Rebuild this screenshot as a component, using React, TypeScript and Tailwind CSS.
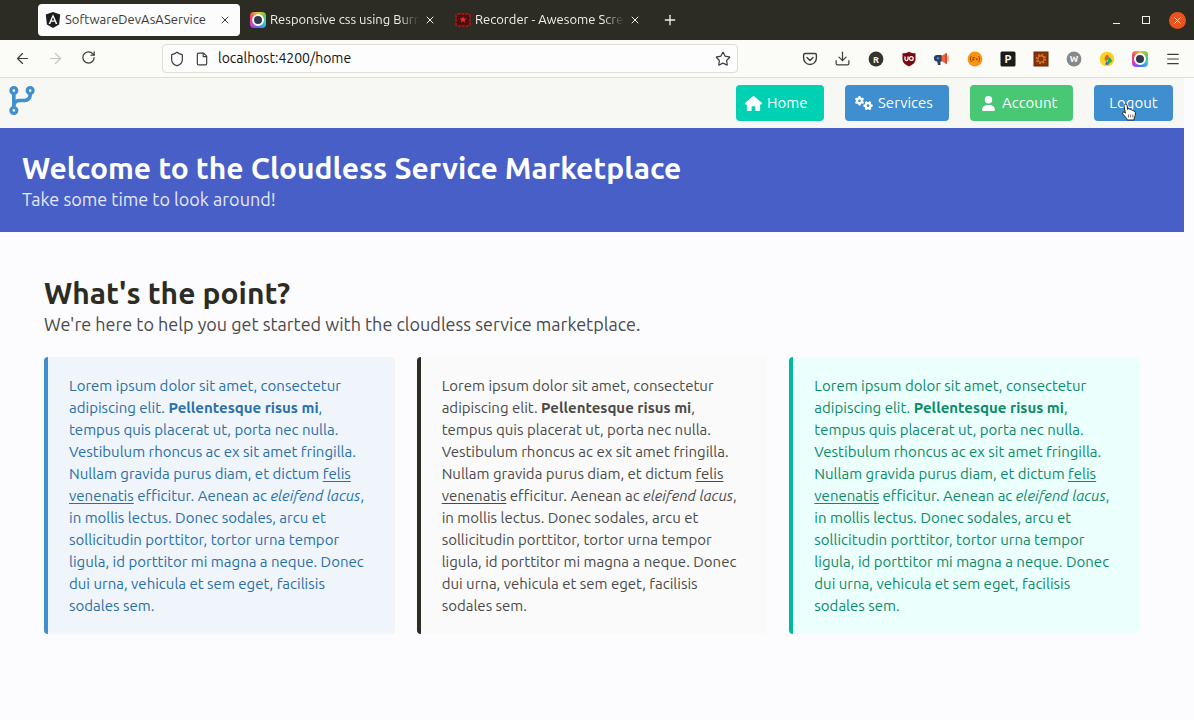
import type { ReactNode } from "react";
import { FaCodeBranch, FaGears, FaHouse, FaUser } from "react-icons/fa6";
import { ArrowLeft, ArrowRight, Download, File, Menu, Plus, RotateCw, Shield, Star, X } from "lucide-react";

function AngularIcon() {
  return (
    <svg viewBox="0 0 16 16" className="size-4 shrink-0" aria-hidden="true">
      <path d="M8 0 15.2 2.5 14.1 12.4 8 16 1.9 12.4 .8 2.5Z" fill="#1c1c1c" />
      <path d="M8 2.2 3.6 12h1.7l.9-2.2h3.6l.9 2.2h1.7ZM8 5.3l1.3 3.1H6.7Z" fill="#fff" />
    </svg>
  );
}

function CameraRingIcon() {
  return (
    <span className="flex size-4 shrink-0 items-center justify-center rounded bg-[conic-gradient(#f4c430,#5ecb5e,#36c3e0,#4a6cf0,#d33bd0,#f04a5a,#f4c430)]">
      <span className="size-3 rounded-full border-2 border-white bg-[#34364a]" />
    </span>
  );
}

function RecorderIcon() {
  return (
    <svg viewBox="0 0 16 14" className="h-3.5 w-4 shrink-0" aria-hidden="true">
      <rect x="1" y="1" width="14" height="12" rx="1.5" fill="#4a1010" stroke="#b01818" strokeWidth="1.6" strokeDasharray="3 1" />
      <path d="M8 3.2 9 5.4 11.5 5.6 9.6 7.2 10.2 9.6 8 8.3 5.8 9.6 6.4 7.2 4.5 5.6 7 5.4Z" fill="#ee2b2b" />
    </svg>
  );
}

function Tab({ icon, title, active = false }: { icon: ReactNode; title: string; active?: boolean }) {
  return (
    <div
      className={
        active
          ? "flex h-8 w-[202px] items-center gap-1 rounded bg-[#fcfcfc] pl-[7px] pr-2 text-[#3a3a3a]"
          : "flex h-8 w-[202px] items-center gap-1 rounded pl-[7px] pr-2 text-[#f0f0ea]"
      }
    >
      {icon}
      <button
        type="button"
        className={
          active
            ? "min-w-0 flex-1 overflow-hidden whitespace-nowrap text-left text-[13px]"
            : "min-w-0 flex-1 overflow-hidden whitespace-nowrap text-left text-[13px] [mask-image:linear-gradient(to_right,#000_86%,transparent_100%)]"
        }
      >
        {title}
      </button>
      <button type="button" aria-label={`Close ${title}`} className="flex w-3.5 justify-center">
        <X size={12} strokeWidth={2} />
      </button>
    </div>
  );
}

function PocketIcon() {
  return (
    <svg viewBox="0 0 16 16" className="size-4" fill="none" stroke="#3c3c38" strokeWidth="1.4" strokeLinecap="round" strokeLinejoin="round" aria-hidden="true">
      <path d="M3 2.5h10a1.4 1.4 0 0 1 1.4 1.4v3.2a6.4 6.4 0 0 1-12.8 0V3.9A1.4 1.4 0 0 1 3 2.5Z" />
      <path d="m5 6.6 3 2.8 3-2.8" />
    </svg>
  );
}

function DownloadIcon() {
  return <Download size={17} strokeWidth={1.7} />;
}

function RoundR() {
  return (
    <svg viewBox="0 0 16 16" className="size-4" aria-hidden="true">
      <circle cx="8" cy="8" r="7.4" fill="#33332f" />
      <text x="8" y="11.5" textAnchor="middle" fontSize="9" fontWeight="700" fill="#fff">R</text>
    </svg>
  );
}

function BlockerIcon() {
  return (
    <svg viewBox="0 0 16 16" className="size-4" aria-hidden="true">
      <path d="M8 .8c2 1 4 1.500 6.500 1.500V8c0 3.600-2.600 5.600-6.500 7.500C4.100 13.600 1.500 11.600 1.500 8V2.300C4 2.300 6 1.800 8 .8Z" fill="#800610" />
      <path d="M4 5.500v2.600a1.500 1.500 0 0 0 3 0V5.500" fill="none" stroke="#fff" strokeWidth="1.3" />
      <circle cx="10.3" cy="7.5" r="1.9" fill="none" stroke="#fff" strokeWidth="1.3" />
    </svg>
  );
}

function MegaphoneIcon() {
  return (
    <svg viewBox="0 0 16 16" className="size-4" aria-hidden="true">
      <path d="M7 5 13 2v11L7 10Z" fill="#f0643c" />
      <path d="M12 2.5v10" stroke="#c8452a" strokeWidth="1.6" />
      <path d="M14 4.5v6" stroke="#f3a08a" strokeWidth="1.5" />
      <path d="M3 4h4.500v6.500H6.500V14H4l-.8-3.500A3.200 3.200 0 0 1 3 4Z" fill="#283f5e" />
      <circle cx="4" cy="7.2" r="1.3" fill="#4d86c6" />
    </svg>
  );
}

function BracesIcon() {
  return (
    <svg viewBox="0 0 16 16" className="size-4" aria-hidden="true">
      <circle cx="8" cy="8" r="7.4" fill="#fb9510" />
      <path d="M4.500 5C3 6.500 3 9.500 4.500 11M11.500 5c1.500 1.500 1.500 4.500 0 6M6 6.500h2M6 6.500v3.500M6 8.200h1.500M8.700 8.200h2M9.700 7.200v2" stroke="#9b4d08" fill="none" />
    </svg>
  );
}

function SquareP() {
  return (
    <svg viewBox="0 0 16 16" className="size-4" aria-hidden="true">
      <rect x=".5" y=".5" width="15" height="15" rx="1.5" fill="#1b1b1b" />
      <text x="8" y="12" textAnchor="middle" fontSize="11" fontWeight="700" fill="#fff">P</text>
    </svg>
  );
}

function GearTile() {
  return (
    <svg viewBox="0 0 16 16" className="size-4" aria-hidden="true">
      <rect x="1" y="1" width="14" height="14" fill="#8a3208" stroke="#682406" />
      <circle cx="8" cy="8" r="4.4" fill="none" stroke="#d9822b" strokeWidth="1.6" strokeDasharray="1.6 1.85" />
      <circle cx="8" cy="8" r="3.1" fill="none" stroke="#d9822b" strokeWidth="1.1" />
    </svg>
  );
}

function RoundW() {
  return (
    <svg viewBox="0 0 16 16" className="size-4" aria-hidden="true">
      <circle cx="8" cy="8" r="7.4" fill="#888884" />
      <text x="8" y="11.3" textAnchor="middle" fontSize="9" fontWeight="700" fill="#fff">W</text>
    </svg>
  );
}

function PinwheelIcon() {
  return (
    <svg viewBox="0 0 16 16" className="size-4" aria-hidden="true">
      <circle cx="8" cy="8" r="7.3" fill="#fbd21e" />
      <path d="M8 3.500c2 1 2.500 3 1 5L6 10C5 7 6 5 8 3.500Z" fill="#ea5b2c" />
      <path d="M9 6.500c2.500-.5 4 1.500 4 4l-4 3Z" fill="#2fa45b" />
      <path d="M8 9 9.500 14l-3.500-.5Z" fill="#3a72c8" />
    </svg>
  );
}

const extensions: { label: string; icon: ReactNode }[] = [
  { label: "Save to Pocket", icon: <PocketIcon /> },
  { label: "Downloads", icon: <DownloadIcon /> },
  { label: "Reader", icon: <RoundR /> },
  { label: "Content blocker", icon: <BlockerIcon /> },
  { label: "Announcements", icon: <MegaphoneIcon /> },
  { label: "Code injector", icon: <BracesIcon /> },
  { label: "Page tools", icon: <SquareP /> },
  { label: "Developer tools", icon: <GearTile /> },
  { label: "Web checker", icon: <RoundW /> },
  { label: "Colours", icon: <PinwheelIcon /> },
  { label: "Screen recorder", icon: <CameraRingIcon /> },
  { label: "Application menu", icon: <Menu size={16} strokeWidth={1.7} /> },
];

function TitleBar() {
  return (
    <div className="flex h-10 items-center bg-[#2c2c24] pl-[38px] pr-2">
      <div className="flex gap-[3px]">
        <Tab active icon={<AngularIcon />} title="SoftwareDevAsAService" />
        <Tab icon={<CameraRingIcon />} title="Responsive css using Burma" />
        <Tab icon={<RecorderIcon />} title="Recorder - Awesome Screenshot" />
      </div>
      <button type="button" aria-label="New tab" className="ml-3 text-[#f0f0ea]">
        <Plus size={16} strokeWidth={2} />
      </button>
      <div className="ml-auto flex items-center text-[#f0f0ea]">
        <button type="button" aria-label="Minimize" className="flex h-4 w-[30px] items-end justify-center pb-1">
          <span className="h-px w-[7px] bg-current" />
        </button>
        <button type="button" aria-label="Maximize" className="flex w-[30px] justify-center">
          <span className="size-2 border border-current" />
        </button>
        <button type="button" aria-label="Close window" className="ml-2 flex size-[17px] items-center justify-center rounded-full bg-[#ea5420] text-white">
          <X size={11} strokeWidth={2} />
        </button>
      </div>
    </div>
  );
}

function Toolbar() {
  return (
    <div className="flex h-[38px] items-center border-b border-[#deded8] bg-[#fbfbf8] pl-[6px] pr-[5px] text-[#3c3c38]">
      <div className="flex w-[156px] shrink-0">
        <button type="button" aria-label="Back" className="flex w-[33px] justify-center"><ArrowLeft size={17} strokeWidth={1.7} /></button>
        <button type="button" aria-label="Forward" className="flex w-[33px] justify-center text-[#c4c4bc]"><ArrowRight size={17} strokeWidth={1.7} /></button>
        <button type="button" aria-label="Reload" className="flex w-[33px] justify-center"><RotateCw size={15} strokeWidth={2} /></button>
      </div>
      <div className="flex h-[29px] min-w-0 flex-1 items-center rounded border border-[#deded4] bg-[#fdfdfd] px-1.5">
        <Shield size={16} strokeWidth={1.8} className="shrink-0" />
        <File size={14} strokeWidth={2} className="ml-[10px] shrink-0" />
        <input
          aria-label="Address"
          defaultValue="localhost:4200/home"
          className="ml-[9px] min-w-0 flex-1 bg-transparent text-[14px] text-[#111111] outline-none"
        />
        <button type="button" aria-label="Bookmark this page"><Star size={16} strokeWidth={1.8} /></button>
      </div>
      <div className="ml-[55px] flex shrink-0">
        {extensions.map((e) => (
          <button key={e.label} type="button" aria-label={e.label} className="flex w-[33px] items-center justify-center">
            {e.icon}
          </button>
        ))}
      </div>
    </div>
  );
}

function HandPointer() {
  return (
    <svg viewBox="0 0 16 18" className="absolute left-[27px] top-[18px] h-[18px] w-4" aria-hidden="true">
      <path
        d="M4.300 1.200c1-.3 1.700.4 1.800 1.300l.6 4 .3-.8c.9-.4 1.700 0 2 .8.9-.4 1.800 0 2 .9.9-.3 1.800.2 2 1 1-.1 1.500.5 1.500 1.500 0 2-.3 3.300-1.200 4.800L13 17H6.200l-.6-1.600L1.800 11c-.8-1.300.4-2.400 1.600-1.700l1 .8L3 3C2.900 2.200 3.400 1.400 4.300 1.200Z"
        fill="#fff"
        stroke="#222"
        strokeLinejoin="round"
      />
      <path d="M7.500 11.500v3M9.700 11.500v3M11.900 11.500v3" stroke="#555" strokeWidth=".8" />
    </svg>
  );
}

function Navbar() {
  return (
    <nav className="flex h-[50px] items-center justify-between bg-[#f7f7f3] pl-[9px] pr-[11px]">
      <a href="#home" aria-label="Start page" className="-mt-1.5 text-[#3e8ed0]"><FaCodeBranch size={29} className="w-[26px]" /></a>
      <div className="flex gap-[21px] text-[15px] text-white">
        <a href="#home" className="flex h-9 min-w-[88px] items-center gap-[5px] rounded bg-[#00d1b2] pl-[9px]">
          <FaHouse size={17} />Home
        </a>
        <a href="#services" className="flex h-9 min-w-[104px] items-center gap-[5px] rounded bg-[#3e8ed0] pl-[10px]">
          <FaGears size={18} />Services
        </a>
        <a href="#account" className="flex h-9 min-w-[103px] items-center gap-[7px] rounded bg-[#48c774] pl-3">
          <FaUser size={15} className="w-[13px]" />Account
        </a>
        <a href="#logout" className="relative flex h-9 min-w-[79px] items-center justify-center rounded bg-[#3e8ed0]">
          Logout
          <HandPointer />
        </a>
      </div>
    </nav>
  );
}

const tones = {
  info: "border-[#3e8ed0] bg-[#eff5fb] text-[#296fa8]",
  dark: "border-[#2c2c24] bg-[#fafafa] text-[#4a4a4a]",
  primary: "border-[#00b8a0] bg-[#ebfffc] text-[#0b8a68]",
};

function Message({ tone }: { tone: keyof typeof tones }) {
  return (
    <article className={`${tones[tone]} rounded border-l-4 pb-[17px] pl-[21px] pr-[22px] pt-[18px] text-[15px] leading-[22px]`}>
      <p>
        Lorem ipsum dolor sit amet, consectetur adipiscing elit. <strong className="font-bold">Pellentesque risus mi</strong>,
        tempus quis placerat ut, porta nec nulla. Vestibulum rhoncus ac ex sit amet fringilla. Nullam gravida purus diam, et
        dictum <a href="#felis" className="underline underline-offset-2">felis venenatis</a> efficitur. Aenean ac{" "}
        <em>eleifend lacus</em>, in mollis lectus. Donec sodales, arcu et sollicitudin porttitor, tortor urna tempor ligula,
        id porttitor mi magna a neque. Donec dui urna, vehicula et sem eget, facilisis sodales sem.
      </p>
    </article>
  );
}

export default function App() {
  return (
    <div className="flex min-h-screen flex-col bg-[#fcfcfe] font-['Ubuntu','Noto_Sans',sans-serif]">
      <header>
        <TitleBar />
        <Toolbar />
      </header>
      <div className="mr-[10px]">
        <Navbar />
        <section className="bg-[#485fc7] px-[22px] pb-[21px] pt-6 text-white">
          <h1 className="text-[30px] font-bold leading-8">Welcome to the Cloudless Service Marketplace</h1>
          <p className="mt-[3px] text-[18px] leading-6 text-[#e3e8fa]">Take some time to look around!</p>
        </section>
        <main className="px-11 pb-10 pt-[45px]">
          <h2 className="text-[30px] font-bold leading-8 text-[#2c2c24]">What's the point?</h2>
          <p className="mt-[3px] text-[18px] leading-6 text-[#4a4a4a]">
            We're here to help you get started with the cloudless service marketplace.
          </p>
          <div className="mt-[21px] grid grid-cols-3 gap-[22px]">
            <Message tone="info" />
            <Message tone="dark" />
            <Message tone="primary" />
          </div>
        </main>
      </div>
    </div>
  );
}
